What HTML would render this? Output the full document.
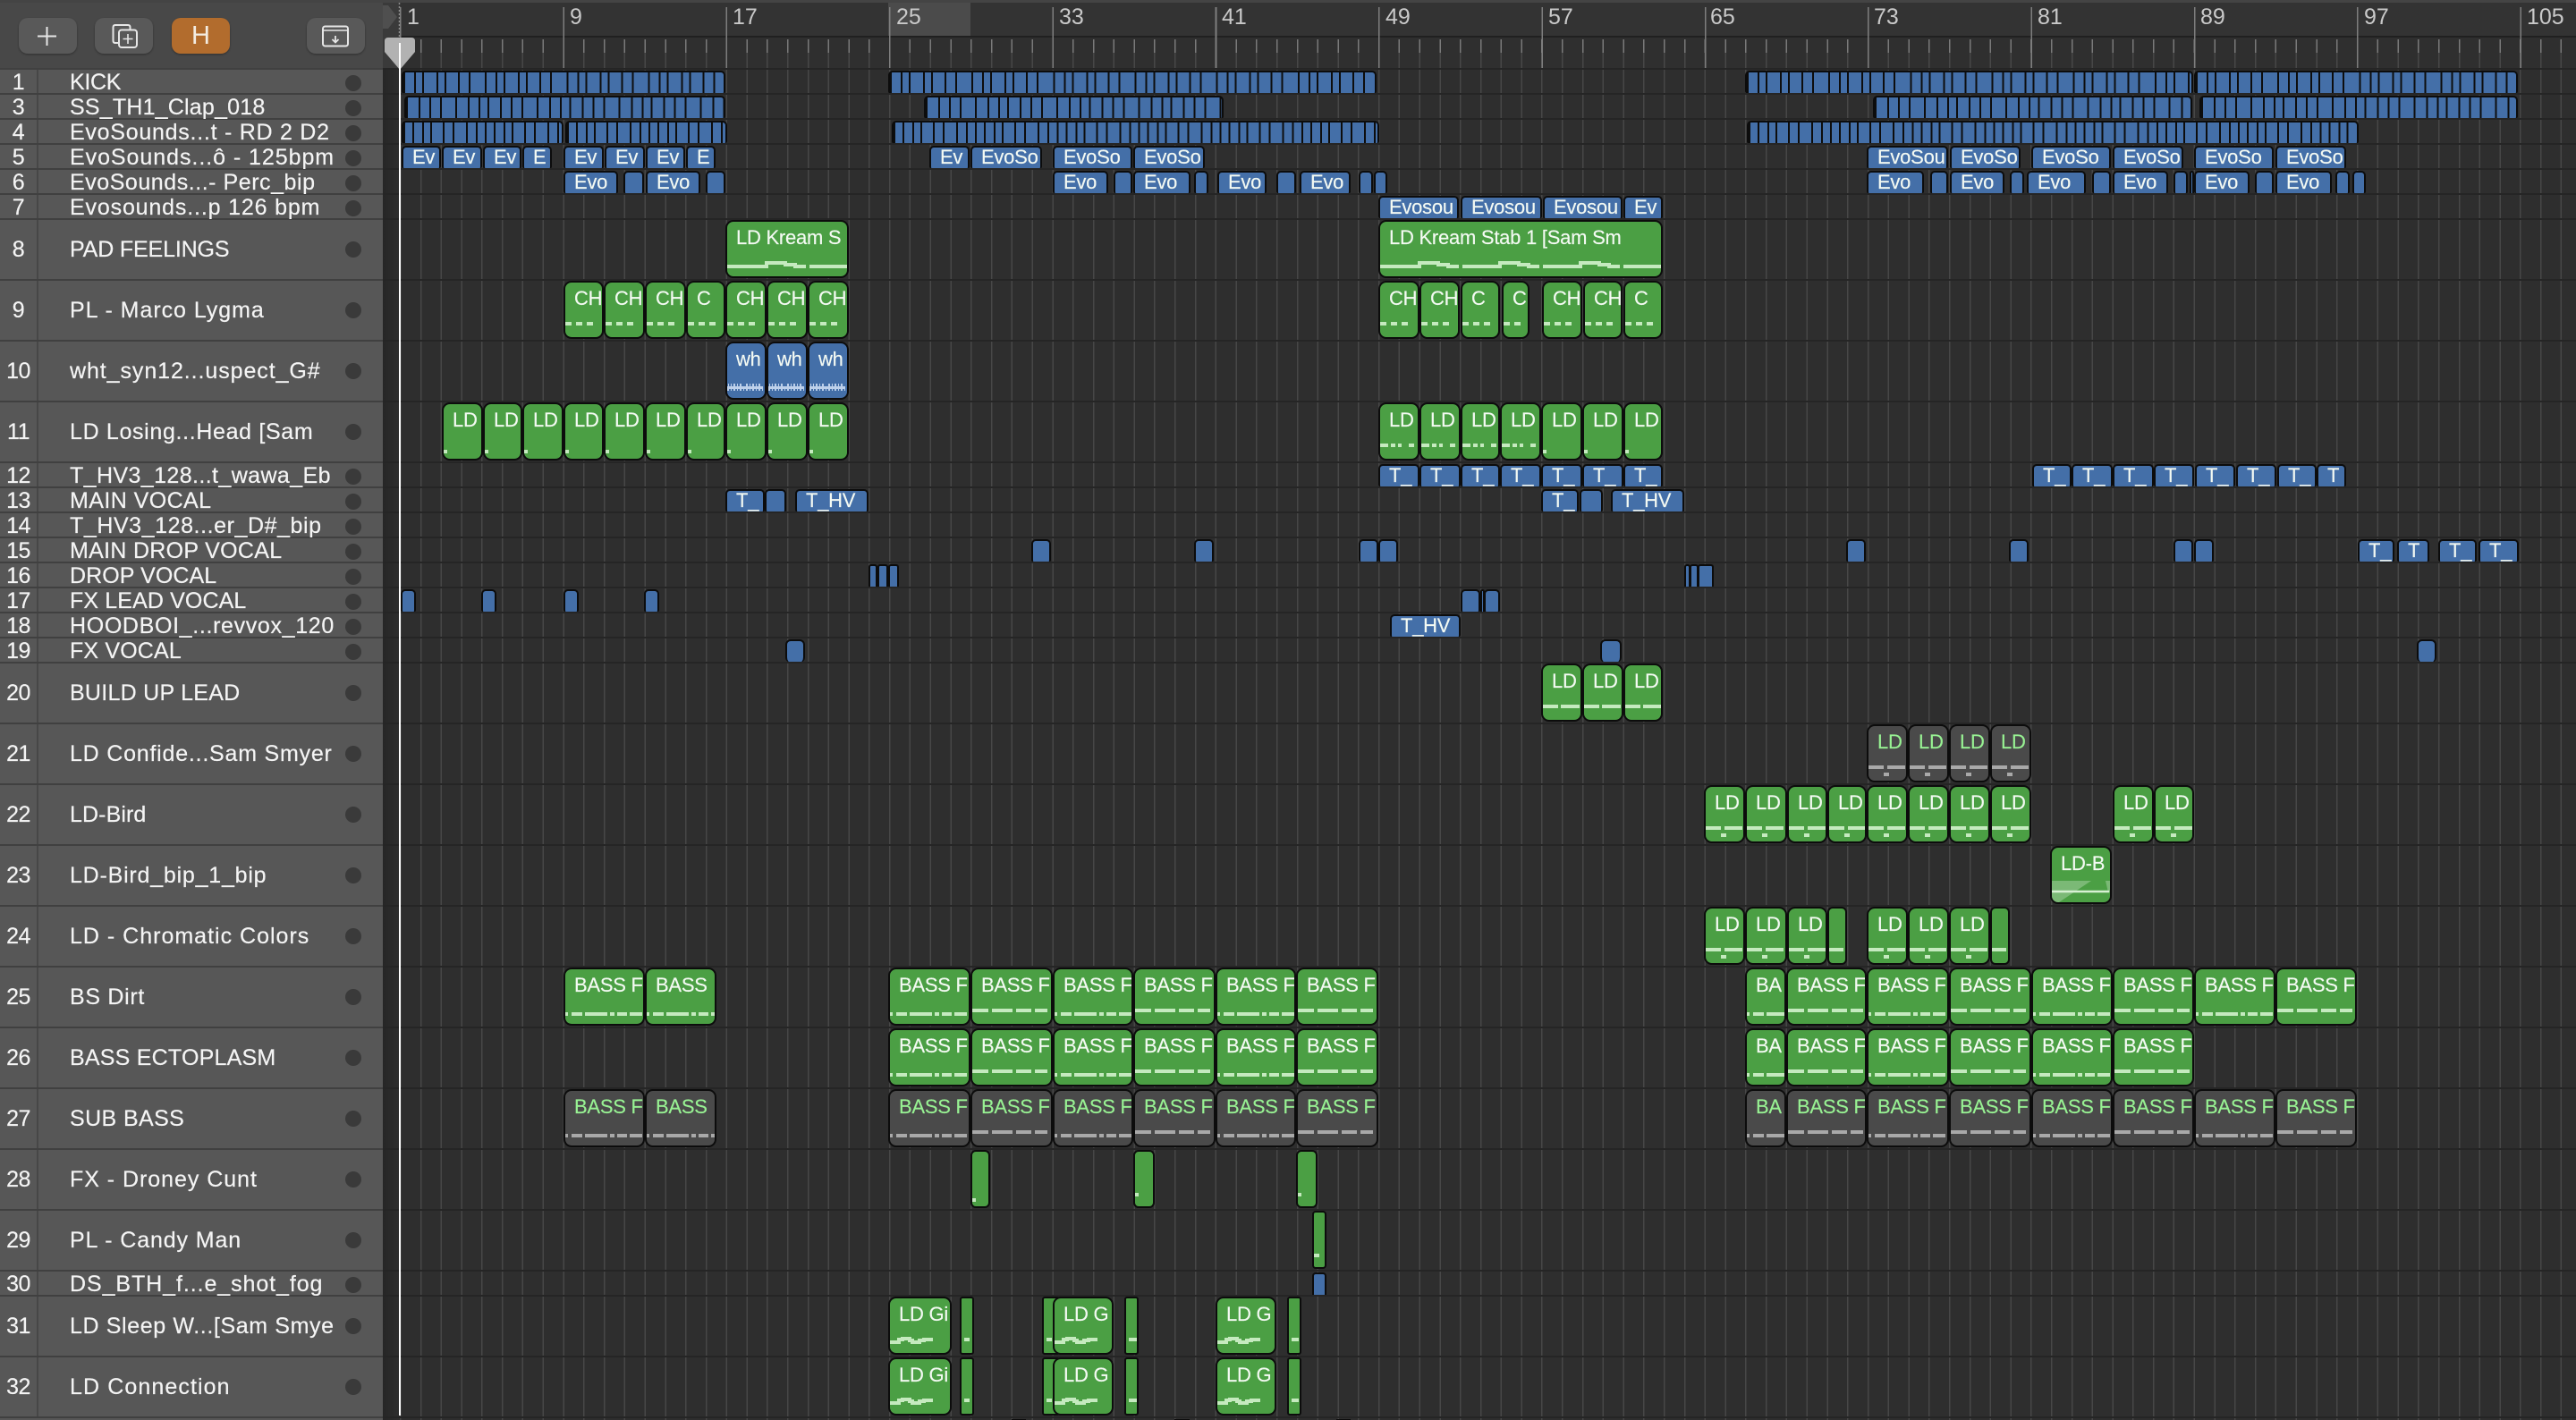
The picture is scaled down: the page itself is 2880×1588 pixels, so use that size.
<!DOCTYPE html>
<html><head><meta charset="utf-8"><title>Arrange</title>
<style>
html,body{margin:0;padding:0;background:#2e2e2e}
#p{position:relative;width:2880px;height:1588px;overflow:hidden;background:#2e2e2e;font-family:"Liberation Sans",sans-serif}
.abs{position:absolute}
.row{position:absolute;left:0;width:2880px}
.s{height:28px}.l{height:68px}
.row::before{content:"";position:absolute;left:0;right:0;top:-1px;height:2px;background:linear-gradient(90deg,#404040 428px,#252525 428px)}
.n,.t{position:absolute;top:0;z-index:1;font-size:25px;color:#f4f4f4;white-space:nowrap;overflow:hidden;-webkit-text-stroke:.2px #f4f4f4}
.n{left:0;width:41px;text-align:center;letter-spacing:-.5px}
.t{left:78px;width:297px;letter-spacing:-.3px}
.s .n,.s .t{height:28px;line-height:31px}
.l .n,.l .t{height:66px;line-height:68px}
.o{position:absolute;left:386px;width:18px;height:18px;border-radius:50%;background:#3a3a3a}
.s .o{top:6.5px}.l .o{top:24.5px}
b{position:absolute;box-sizing:border-box;border:2px solid #0c0c0c;font-weight:400;overflow:hidden;white-space:nowrap;font-size:22px;letter-spacing:-.25px;text-indent:10px;color:#f4faf3;-webkit-text-stroke:.15px currentColor}
.s b{top:2px;height:26px;border-bottom:0;border-radius:5px 5px 3px 3px;line-height:22px}
.l b{top:1px;height:65px;border-radius:9px;line-height:36px}
.g{background:#4b9f44;--c:#c5eabf}
.bl{background:#446fa8;--c:#d3e2f6}
.k{background:#4a4a4a;--c:#a9a9a9;color:#98f293}
.st1{background:repeating-linear-gradient(90deg,#0d0d0d 0 2px,transparent 2px 12px,#0d0d0d 12px 14px,transparent 14px 21px,#0d0d0d 21px 23px,transparent 23px 37px,#0d0d0d 37px 39px,transparent 39px 46px,#0d0d0d 46px 48px,transparent 48px 61px,#0d0d0d 61px 63px,transparent 63px 73px,#0d0d0d 73px 75px,transparent 75px 91.18px),#446fa8}
.st2{background:repeating-linear-gradient(90deg,#0d0d0d 0 2px,transparent 2px 14px,#0d0d0d 14px 16px,transparent 16px 26px,#0d0d0d 26px 28px,transparent 28px 38px,#0d0d0d 38px 40px,transparent 40px 55px,#0d0d0d 55px 57px,transparent 57px 69px,#0d0d0d 69px 71px,transparent 71px 81px,#0d0d0d 81px 83px,transparent 83px 91.18px),#446fa8}
.st3{background:repeating-linear-gradient(90deg,#0d0d0d 0 2px,transparent 2px 10px,#0d0d0d 10px 12px,transparent 12px 21px,#0d0d0d 21px 23px,transparent 23px 30px,#0d0d0d 30px 32px,transparent 32px 44px,#0d0d0d 44px 46px,transparent 46px 55px,#0d0d0d 55px 57px,transparent 57px 70px,#0d0d0d 70px 72px,transparent 72px 81px,#0d0d0d 81px 83px,transparent 83px 91.18px),#446fa8}
u{position:absolute;display:block;text-decoration:none;left:0;right:0;top:44px;height:4px}
.a{background:linear-gradient(90deg,var(--c) 0 18px,transparent 18px 22px,var(--c) 22px 45px,transparent 45px 49px,var(--c) 49px 66px,transparent 66px 70px,var(--c) 70px 84px,transparent 84px)}
.c{top:48px;background:linear-gradient(90deg,var(--c) 0 3px,transparent 3px 7px,var(--c) 7px 19px,transparent 19px 22px,var(--c) 22px 47px,transparent 47px 50px,var(--c) 50px 55px,transparent 55px 58px,var(--c) 58px 69px,transparent 69px 72px,var(--c) 72px 86px,transparent 86px)}
.ld{height:12px;background:linear-gradient(var(--c),var(--c)) 0 0/17px 4px no-repeat,linear-gradient(var(--c),var(--c)) 21px 0/20px 4px no-repeat,linear-gradient(var(--c),var(--c)) 17px 8px/6px 4px no-repeat}
.e{background:linear-gradient(90deg,var(--c) 0 17px,transparent 17px 20px,var(--c) 20px 41px,transparent 41px)}
.ch{background:repeating-linear-gradient(90deg,var(--c) 0 7px,transparent 7px 12px);right:6px}
.w{top:43px;height:10px;right:2px;opacity:.85;background:repeating-linear-gradient(90deg,#446fa8 0 1px,transparent 1px 5px,#446fa8 5px 6px,transparent 6px 13px) 0 0/100% 5px no-repeat,linear-gradient(var(--c),var(--c)) 0 5px/100% 3px no-repeat,repeating-linear-gradient(90deg,var(--c) 0 2px,transparent 2px 4px,var(--c) 4px 5px,transparent 5px 7px) 0 2px/100% 8px no-repeat}
.p{top:51px;width:4px;right:auto}
.d{background:linear-gradient(90deg,var(--c) 0 9px,transparent 9px 12px,var(--c) 12px 17px,transparent 17px 20px,var(--c) 20px 24px,transparent 24px 32px,var(--c) 32px 38px,transparent 38px)}
.m{right:auto;width:6px;background:var(--c)}
svg.q{position:absolute;left:0;top:0}
.rl{position:absolute;top:7px;font-size:25px;line-height:24px;color:#c9c9c9}
.btn{position:absolute;top:20px;width:65px;height:40px;border-radius:10px;background:#595959;box-shadow:0 1px 2px rgba(0,0,0,.35)}
</style></head><body><div id="p">

<!-- sidebar base -->
<div class="abs" style="left:0;top:0;width:428px;height:78px;background:#484848"></div>
<div class="abs" style="left:0;top:0;width:2880px;height:3px;background:#444"></div>
<div class="abs" style="left:0;top:78px;width:428px;height:1510px;background:#575757"></div>
<div class="abs" style="left:41px;top:78px;width:2px;height:1507px;background:#474747"></div>
<div class="abs" style="left:428px;top:3px;width:19px;height:75px;background:#3a3a3a"></div>
<div class="abs" style="left:428px;top:78px;width:19px;height:1510px;background:linear-gradient(90deg,#262626,#2e2e2e)"></div>

<!-- ruler -->
<div class="abs" style="left:447px;top:3px;width:2433px;height:37px;background:#333"></div>
<div class="abs" style="left:993px;top:3px;width:92px;height:37px;background:#4b4b4b"></div>
<div class="abs" style="left:447px;top:40px;width:2433px;height:2px;background:#202020"></div>
<div class="abs" style="left:447px;top:42px;width:2433px;height:36px;background:#2f2f2f"></div>
<div class="abs" style="left:447px;top:59px;width:2433px;height:1529px;background:repeating-linear-gradient(90deg,#474747 0 1.5px,transparent 1.5px 22.79px)"></div>
<div class="abs" style="left:447px;top:44px;width:2433px;height:15px;background:repeating-linear-gradient(90deg,#7a7a7a 0 1.5px,transparent 1.5px 22.79px)"></div>
<div class="abs" style="left:447px;top:8px;width:2433px;height:70px;background:repeating-linear-gradient(90deg,#7e7e7e 0 1.5px,transparent 1.5px 182.35px)"></div>
<div class="rl" style="left:455px">1</div><div class="rl" style="left:637px">9</div><div class="rl" style="left:819px">17</div><div class="rl" style="left:1002px">25</div><div class="rl" style="left:1184px">33</div><div class="rl" style="left:1366px">41</div><div class="rl" style="left:1549px">49</div><div class="rl" style="left:1731px">57</div><div class="rl" style="left:1912px">65</div><div class="rl" style="left:2095px">73</div><div class="rl" style="left:2278px">81</div><div class="rl" style="left:2460px">89</div><div class="rl" style="left:2643px">97</div><div class="rl" style="left:2825px">105</div>

<!-- toolbar -->
<div class="btn" style="left:21px"></div>
<div class="btn" style="left:106px"></div>
<div class="btn" style="left:192px;background:#b26c2d;color:#f3ece2;font-size:29px;line-height:40px;text-align:center">H</div>
<div class="btn" style="left:343px"></div>
<svg class="abs" style="left:0;top:0" width="428" height="78" fill="none" stroke="#e6e6e6" stroke-width="2">
<path d="M42 40.5H63M52.5 30V51"/>
<path d="M133 48H129Q126.500 48 126.500 45.500V30.500Q126.500 28 129 28H143Q145.500 28 145.500 30.500V33"/>
<rect x="133" y="33.500" width="20" height="19.500" rx="3"/>
<path d="M143 38V49M137.500 43.500H148.500" stroke-width="1.600"/>
<rect x="361" y="29.500" width="28" height="22" rx="2.500"/>
<path d="M361 34H389" stroke-width="1.600"/>
<path d="M375 40V47.500M371.500 44L375 47.500L378.500 44" stroke-width="1.800"/>
</svg>

<!-- rows -->
<div class="row s" style="top:77px"><span class="n">1</span><span class="t">KICK</span><i class="o"></i>
<b class="st1" style="left:449px;width:362px"></b><b class="st1" style="left:993px;width:546px"></b><b class="st1" style="left:1951px;width:501px"></b><b class="st1" style="left:2453px;width:362px"></b></div>

<div class="row s" style="top:105px"><span class="n">3</span><span class="t" style="letter-spacing:.2px">SS_TH1_Clap_018</span><i class="o"></i>
<b class="st2" style="left:452px;width:359px"></b><b class="st2" style="left:1033px;width:335px"></b><b class="st2" style="left:2094px;width:357px"></b><b class="st2" style="left:2459px;width:356px"></b></div>

<div class="row s" style="top:133px"><span class="n">4</span><span class="t" style="letter-spacing:.74px">EvoSounds...t - RD 2 D2</span><i class="o"></i>
<b class="st3" style="left:449px;width:181px"></b><b class="st3" style="left:632px;width:181px"></b><b class="st3" style="left:997px;width:545px"></b><b class="st3" style="left:1953px;width:684px"></b></div>

<div class="row s" style="top:161px"><span class="n">5</span><span class="t" style="letter-spacing:.95px">EvoSounds...ô - 125bpm</span><i class="o"></i>
<b class="bl" style="left:449px;width:44px">Ev</b><b class="bl" style="left:494px;width:45px">Ev</b><b class="bl" style="left:540px;width:43px">Ev</b><b class="bl" style="left:584px;width:33px">E</b>
<b class="bl" style="left:630px;width:45px">Ev</b><b class="bl" style="left:676px;width:45px">Ev</b><b class="bl" style="left:722px;width:44px">Ev</b><b class="bl" style="left:767px;width:33px">E</b>
<b class="bl" style="left:1039px;width:45px">Ev</b><b class="bl" style="left:1085px;width:80px">EvoSo</b><b class="bl" style="left:1177px;width:89px">EvoSo</b><b class="bl" style="left:1267px;width:80px">EvoSo</b>
<b class="bl" style="left:2087px;width:91px">EvoSou</b><b class="bl" style="left:2180px;width:79px">EvoSo</b><b class="bl" style="left:2271px;width:89px">EvoSo</b><b class="bl" style="left:2362px;width:79px">EvoSo</b><b class="bl" style="left:2453px;width:89px">EvoSo</b><b class="bl" style="left:2544px;width:79px">EvoSo</b></div>

<div class="row s" style="top:189px"><span class="n">6</span><span class="t" style="letter-spacing:.54px">EvoSounds...- Perc_bip</span><i class="o"></i>
<b class="bl" style="left:630px;width:61px">Evo</b><b class="bl" style="left:697px;width:23px"></b><b class="bl" style="left:722px;width:61px">Evo</b><b class="bl" style="left:789px;width:22px"></b>
<b class="bl" style="left:1177px;width:62px">Evo</b><b class="bl" style="left:1245px;width:21px"></b><b class="bl" style="left:1267px;width:64px">Evo</b><b class="bl" style="left:1335px;width:16px"></b><b class="bl" style="left:1361px;width:55px">Evo</b><b class="bl" style="left:1427px;width:22px"></b><b class="bl" style="left:1453px;width:57px">Evo</b><b class="bl" style="left:1519px;width:16px"></b><b class="bl" style="left:1536px;width:15px"></b>
<b class="bl" style="left:2087px;width:64px">Evo</b><b class="bl" style="left:2158px;width:20px"></b><b class="bl" style="left:2180px;width:61px">Evo</b><b class="bl" style="left:2247px;width:16px"></b><b class="bl" style="left:2266px;width:66px">Evo</b><b class="bl" style="left:2339px;width:21px"></b><b class="bl" style="left:2362px;width:62px">Evo</b><b class="bl" style="left:2430px;width:16px"></b><b class="bl" style="left:2448px;width:5px"></b><b class="bl" style="left:2453px;width:62px">Evo</b><b class="bl" style="left:2521px;width:21px"></b><b class="bl" style="left:2544px;width:63px">Evo</b><b class="bl" style="left:2611px;width:16px"></b><b class="bl" style="left:2630px;width:15px"></b></div>

<div class="row s" style="top:217px"><span class="n">7</span><span class="t" style="letter-spacing:.84px">Evosounds...p 126 bpm</span><i class="o"></i>
<b class="bl" style="left:1541px;width:90px">Evosou</b><b class="bl" style="left:1633px;width:91px">Evosou</b><b class="bl" style="left:1725px;width:89px">Evosou</b><b class="bl" style="left:1815px;width:44px">Ev</b></div>

<div class="row l" style="top:245px"><span class="n">8</span><span class="t" style="letter-spacing:-.15px">PAD FEELINGS</span><i class="o"></i>
<b class="g" style="left:811px;width:138px">LD Kream S<svg class="q" width="134" height="60"><path d="M0 50H44V46H65V48H76V50H88M92 50H134" fill="none" stroke="#c5eabf" stroke-width="4"/></svg></b>
<b class="g" style="left:1541px;width:318px">LD Kream Stab 1 [Sam Sm<svg class="q" width="314" height="60"><path d="M0 50H44V46H65V48H76V50H88M92 50H134V46H155V48H166V50H178M182 50H224V46H245V48H256V50H268M272 50H314" fill="none" stroke="#c5eabf" stroke-width="4"/></svg></b></div>

<div class="row l" style="top:313px"><span class="n">9</span><span class="t" style="letter-spacing:.96px">PL - Marco Lygma</span><i class="o"></i>
<b class="g" style="left:630px;width:45px">CH<u class="ch"></u></b><b class="g" style="left:675px;width:46px">CH<u class="ch"></u></b><b class="g" style="left:721px;width:46px">CH<u class="ch"></u></b><b class="g" style="left:767px;width:44px">C<u class="ch"></u></b><b class="g" style="left:811px;width:46px">CH<u class="ch"></u></b><b class="g" style="left:857px;width:46px">CH<u class="ch"></u></b><b class="g" style="left:903px;width:46px">CH<u class="ch"></u></b>
<b class="g" style="left:1541px;width:46px">CH<u class="ch"></u></b><b class="g" style="left:1587px;width:45px">CH<u class="ch"></u></b><b class="g" style="left:1633px;width:44px">C<u class="ch"></u></b><b class="g" style="left:1679px;width:31px">C<u class="ch"></u></b><b class="g" style="left:1724px;width:45px">CH<u class="ch"></u></b><b class="g" style="left:1770px;width:44px">CH<u class="ch"></u></b><b class="g" style="left:1815px;width:44px">C<u class="ch"></u></b></div>

<div class="row l" style="top:381px"><span class="n">10</span><span class="t" style="letter-spacing:.92px">wht_syn12...uspect_G#</span><i class="o"></i>
<b class="bl" style="left:811px;width:46px">wh<u class="w"></u></b><b class="bl" style="left:857px;width:46px">wh<u class="w"></u></b><b class="bl" style="left:903px;width:46px">wh<u class="w"></u></b></div>

<div class="row l" style="top:449px"><span class="n">11</span><span class="t" style="letter-spacing:.66px">LD Losing...Head [Sam</span><i class="o"></i>
<b class="g" style="left:494px;width:46px">LD<u class="p" style="background:#c5eabf"></u></b><b class="g" style="left:540px;width:44px">LD<u class="p" style="background:#c5eabf"></u></b><b class="g" style="left:584px;width:46px">LD<u class="p" style="background:#c5eabf"></u></b><b class="g" style="left:630px;width:45px">LD<u class="p" style="background:#c5eabf"></u></b><b class="g" style="left:675px;width:46px">LD<u class="p" style="background:#c5eabf"></u></b><b class="g" style="left:721px;width:46px">LD<u class="p" style="background:#c5eabf"></u></b><b class="g" style="left:767px;width:44px">LD<u class="p" style="background:#c5eabf"></u></b><b class="g" style="left:811px;width:46px">LD<u class="p" style="background:#c5eabf"></u></b><b class="g" style="left:857px;width:46px">LD<u class="p" style="background:#c5eabf"></u></b><b class="g" style="left:903px;width:46px">LD<u class="p" style="background:#c5eabf"></u></b>
<b class="g" style="left:1541px;width:46px">LD<u class="d"></u></b><b class="g" style="left:1587px;width:46px">LD<u class="d"></u></b><b class="g" style="left:1633px;width:44px">LD<u class="d"></u></b><b class="g" style="left:1677px;width:46px">LD<u class="d"></u></b><b class="g" style="left:1723px;width:46px">LD<u class="p" style="background:#c5eabf"></u></b><b class="g" style="left:1769px;width:46px">LD<u class="p" style="background:#c5eabf"></u></b><b class="g" style="left:1815px;width:44px">LD<u class="p" style="background:#c5eabf"></u></b></div>

<div class="row s" style="top:517px"><span class="n">12</span><span class="t" style="letter-spacing:.4px">T_HV3_128...t_wawa_Eb</span><i class="o"></i>
<b class="bl" style="left:1541px;width:46px">T_</b><b class="bl" style="left:1587px;width:46px">T_</b><b class="bl" style="left:1633px;width:44px">T_</b><b class="bl" style="left:1677px;width:46px">T_</b><b class="bl" style="left:1723px;width:46px">T_</b><b class="bl" style="left:1769px;width:46px">T_</b><b class="bl" style="left:1815px;width:44px">T_</b>
<b class="bl" style="left:2272px;width:44px">T_</b><b class="bl" style="left:2316px;width:46px">T_</b><b class="bl" style="left:2362px;width:46px">T_</b><b class="bl" style="left:2408px;width:45px">T_</b><b class="bl" style="left:2454px;width:45px">T_</b><b class="bl" style="left:2500px;width:45px">T_</b><b class="bl" style="left:2546px;width:44px">T_</b><b class="bl" style="left:2590px;width:33px">T</b></div>

<div class="row s" style="top:545px"><span class="n">13</span><span class="t" style="letter-spacing:.43px">MAIN VOCAL</span><i class="o"></i>
<b class="bl" style="left:811px;width:44px">T_</b><b class="bl" style="left:855px;width:24px"></b><b class="bl" style="left:889px;width:82px">T_HV</b>
<b class="bl" style="left:1723px;width:42px">T_</b><b class="bl" style="left:1766px;width:26px"></b><b class="bl" style="left:1801px;width:82px">T_HV</b></div>

<div class="row s" style="top:573px"><span class="n">14</span><span class="t" style="letter-spacing:.57px">T_HV3_128...er_D#_bip</span><i class="o"></i></div>

<div class="row s" style="top:601px"><span class="n">15</span><span class="t" style="letter-spacing:.3px">MAIN DROP VOCAL</span><i class="o"></i>
<b class="bl" style="left:1153px;width:22px"></b><b class="bl" style="left:1335px;width:22px"></b><b class="bl" style="left:1519px;width:22px"></b><b class="bl" style="left:1541px;width:22px"></b><b class="bl" style="left:2064px;width:22px"></b><b class="bl" style="left:2246px;width:22px"></b><b class="bl" style="left:2430px;width:22px"></b><b class="bl" style="left:2453px;width:22px"></b>
<b class="bl" style="left:2636px;width:41px">T_</b><b class="bl" style="left:2680px;width:36px">T</b><b class="bl" style="left:2726px;width:43px">T_</b><b class="bl" style="left:2771px;width:45px">T_</b></div>

<div class="row s" style="top:629px"><span class="n">16</span><span class="t" style="letter-spacing:.07px">DROP VOCAL</span><i class="o"></i>
<b class="bl" style="left:971px;width:10px;border-radius:3px 3px 0 0"></b><b class="bl" style="left:981px;width:12px;border-radius:3px 3px 0 0"></b><b class="bl" style="left:993px;width:12px;border-radius:3px 3px 0 0"></b>
<b class="bl" style="left:1883px;width:7px;border-radius:3px 3px 0 0"></b><b class="bl" style="left:1889px;width:10px;border-radius:3px 3px 0 0"></b><b class="bl" style="left:1898px;width:18px;border-radius:3px 3px 0 0"></b></div>

<div class="row s" style="top:657px"><span class="n">17</span><span class="t" style="letter-spacing:.12px">FX LEAD VOCAL</span><i class="o"></i>
<b class="bl" style="left:448px;width:17px"></b><b class="bl" style="left:538px;width:17px"></b><b class="bl" style="left:630px;width:17px"></b><b class="bl" style="left:720px;width:17px"></b><b class="bl" style="left:1633px;width:22px"></b><b class="bl" style="left:1655px;width:5px"></b><b class="bl" style="left:1659px;width:18px"></b></div>

<div class="row s" style="top:685px"><span class="n">18</span><span class="t" style="letter-spacing:.66px">HOODBOI_...revvox_120</span><i class="o"></i>
<b class="bl" style="left:1554px;width:79px">T_HV</b></div>

<div class="row s" style="top:713px"><span class="n">19</span><span class="t" style="letter-spacing:.16px">FX VOCAL</span><i class="o"></i>
<b class="bl" style="left:878px;width:22px;border-radius:6px"></b><b class="bl" style="left:1789px;width:24px;border-radius:6px"></b><b class="bl" style="left:2702px;width:22px;border-radius:6px"></b></div>

<div class="row l" style="top:741px"><span class="n">20</span><span class="t" style="letter-spacing:.26px">BUILD UP LEAD</span><i class="o"></i>
<b class="g" style="left:1723px;width:46px">LD<u class="e"></u></b><b class="g" style="left:1769px;width:46px">LD<u class="e"></u></b><b class="g" style="left:1815px;width:44px">LD<u class="e"></u></b></div>

<div class="row l" style="top:809px"><span class="n">21</span><span class="t" style="letter-spacing:.78px">LD Confide...Sam Smyer</span><i class="o"></i>
<b class="k" style="left:2087px;width:46px">LD<u class="ld"></u></b><b class="k" style="left:2133px;width:46px">LD<u class="ld"></u></b><b class="k" style="left:2179px;width:46px">LD<u class="ld"></u></b><b class="k" style="left:2225px;width:46px">LD<u class="ld"></u></b></div>

<div class="row l" style="top:877px"><span class="n">22</span><span class="t" style="letter-spacing:.1px">LD-Bird</span><i class="o"></i>
<b class="g" style="left:1905px;width:46px">LD<u class="ld"></u></b><b class="g" style="left:1951px;width:47px">LD<u class="ld"></u></b><b class="g" style="left:1998px;width:45px">LD<u class="ld"></u></b><b class="g" style="left:2043px;width:44px">LD<u class="ld"></u></b><b class="g" style="left:2087px;width:46px">LD<u class="ld"></u></b><b class="g" style="left:2133px;width:46px">LD<u class="ld"></u></b><b class="g" style="left:2179px;width:46px">LD<u class="ld"></u></b><b class="g" style="left:2225px;width:46px">LD<u class="ld"></u></b><b class="g" style="left:2362px;width:46px">LD<u class="ld"></u></b><b class="g" style="left:2408px;width:45px">LD<u class="ld"></u></b></div>

<div class="row l" style="top:945px"><span class="n">23</span><span class="t" style="letter-spacing:.78px">LD-Bird_bip_1_bip</span><i class="o"></i>
<b class="g" style="left:2292px;width:69px">LD-B<svg class="q" width="65" height="61"><path d="M0 37H44L8 61H0ZM60 37H65V50H63Z" fill="#fff" fill-opacity=".27"/><path d="M0 49H64" stroke="#d7f0d3" stroke-width="2.500"/></svg></b></div>

<div class="row l" style="top:1013px"><span class="n">24</span><span class="t" style="letter-spacing:1px">LD - Chromatic Colors</span><i class="o"></i>
<b class="g" style="left:1905px;width:46px">LD<u class="ld"></u></b><b class="g" style="left:1951px;width:47px">LD<u class="ld"></u></b><b class="g" style="left:1998px;width:45px">LD<u class="ld"></u></b><b class="g" style="left:2043px;width:22px;border-radius:6px"><u class="a" style="right:2px"></u></b><b class="g" style="left:2087px;width:46px">LD<u class="ld"></u></b><b class="g" style="left:2133px;width:46px">LD<u class="ld"></u></b><b class="g" style="left:2179px;width:46px">LD<u class="ld"></u></b><b class="g" style="left:2225px;width:22px;border-radius:6px"><u class="a" style="right:2px"></u></b></div>

<div class="row l" style="top:1081px"><span class="n">25</span><span class="t" style="letter-spacing:.7px">BS Dirt</span><i class="o"></i>
<b class="g" style="left:630px;width:91px">BASS F<u class="c"></u></b><b class="g" style="left:721px;width:80px">BASS<u class="c"></u></b>
<b class="g" style="left:993px;width:92px">BASS F<u class="c"></u></b><b class="g" style="left:1085px;width:92px">BASS F<u class="a"></u></b><b class="g" style="left:1177px;width:90px">BASS F<u class="c"></u></b><b class="g" style="left:1267px;width:92px">BASS F<u class="a"></u></b><b class="g" style="left:1359px;width:90px">BASS F<u class="c"></u></b><b class="g" style="left:1449px;width:92px">BASS F<u class="a"></u></b>
<b class="g" style="left:1951px;width:46px">BA<u class="c"></u></b><b class="g" style="left:1997px;width:90px">BASS F<u class="a"></u></b><b class="g" style="left:2087px;width:92px">BASS F<u class="c"></u></b><b class="g" style="left:2179px;width:92px">BASS F<u class="a"></u></b><b class="g" style="left:2271px;width:91px">BASS F<u class="c"></u></b><b class="g" style="left:2362px;width:91px">BASS F<u class="a"></u></b><b class="g" style="left:2453px;width:91px">BASS F<u class="c"></u></b><b class="g" style="left:2544px;width:91px">BASS F<u class="a"></u></b></div>

<div class="row l" style="top:1149px"><span class="n">26</span><span class="t" style="letter-spacing:.22px">BASS ECTOPLASM</span><i class="o"></i>
<b class="g" style="left:993px;width:92px">BASS F<u class="c"></u></b><b class="g" style="left:1085px;width:92px">BASS F<u class="a"></u></b><b class="g" style="left:1177px;width:90px">BASS F<u class="c"></u></b><b class="g" style="left:1267px;width:92px">BASS F<u class="a"></u></b><b class="g" style="left:1359px;width:90px">BASS F<u class="c"></u></b><b class="g" style="left:1449px;width:92px">BASS F<u class="a"></u></b>
<b class="g" style="left:1951px;width:46px">BA<u class="c"></u></b><b class="g" style="left:1997px;width:90px">BASS F<u class="a"></u></b><b class="g" style="left:2087px;width:92px">BASS F<u class="c"></u></b><b class="g" style="left:2179px;width:92px">BASS F<u class="a"></u></b><b class="g" style="left:2271px;width:91px">BASS F<u class="c"></u></b><b class="g" style="left:2362px;width:91px">BASS F<u class="a"></u></b></div>

<div class="row l" style="top:1217px"><span class="n">27</span><span class="t" style="letter-spacing:.4px">SUB BASS</span><i class="o"></i>
<b class="k" style="left:630px;width:91px">BASS F<u class="c"></u></b><b class="k" style="left:721px;width:80px">BASS<u class="c"></u></b>
<b class="k" style="left:993px;width:92px">BASS F<u class="c"></u></b><b class="k" style="left:1085px;width:92px">BASS F<u class="a"></u></b><b class="k" style="left:1177px;width:90px">BASS F<u class="c"></u></b><b class="k" style="left:1267px;width:92px">BASS F<u class="a"></u></b><b class="k" style="left:1359px;width:90px">BASS F<u class="c"></u></b><b class="k" style="left:1449px;width:92px">BASS F<u class="a"></u></b>
<b class="k" style="left:1951px;width:46px">BA<u class="c"></u></b><b class="k" style="left:1997px;width:90px">BASS F<u class="a"></u></b><b class="k" style="left:2087px;width:92px">BASS F<u class="c"></u></b><b class="k" style="left:2179px;width:92px">BASS F<u class="a"></u></b><b class="k" style="left:2271px;width:91px">BASS F<u class="c"></u></b><b class="k" style="left:2362px;width:91px">BASS F<u class="a"></u></b><b class="k" style="left:2453px;width:91px">BASS F<u class="c"></u></b><b class="k" style="left:2544px;width:91px">BASS F<u class="a"></u></b></div>

<div class="row l" style="top:1285px"><span class="n">28</span><span class="t" style="letter-spacing:.96px">FX - Droney Cunt</span><i class="o"></i>
<b class="g" style="left:1085px;width:22px;border-radius:6px"><u class="m" style="top:52px;width:4px"></u></b><b class="g" style="left:1267px;width:24px;border-radius:6px"><u class="m" style="top:46px;width:4px"></u></b><b class="g" style="left:1449px;width:24px;border-radius:6px"><u class="m" style="top:46px;width:4px"></u></b></div>

<div class="row l" style="top:1353px"><span class="n">29</span><span class="t" style="letter-spacing:.88px">PL - Candy Man</span><i class="o"></i>
<b class="g" style="left:1467px;width:16px;border-radius:4px"><u class="m" style="top:46px"></u></b></div>

<div class="row s" style="top:1421px"><span class="n">30</span><span class="t" style="letter-spacing:.92px">DS_BTH_f...e_shot_fog</span><i class="o"></i>
<b class="bl" style="left:1467px;width:16px;border-radius:4px 4px 0 0"></b></div>

<div class="row l" style="top:1449px"><span class="n">31</span><span class="t" style="letter-spacing:.62px">LD Sleep W...[Sam Smye</span><i class="o"></i>
<b class="g" style="left:993px;width:71px">LD Gi<svg class="q" width="67" height="60"><path d="M0 49H10V46H14V45H22V47H25V49H33V47H38V46H48" fill="none" stroke="#c5eabf" stroke-width="4"/></svg></b><b class="g" style="left:1073px;width:16px;border-radius:3px"><u class="m" style="left:3px"></u></b><b class="g" style="left:1165px;width:20px;border-radius:3px"><u class="m" style="left:3px"></u></b>
<b class="g" style="left:1177px;width:68px">LD G<svg class="q" width="64" height="60"><path d="M0 49H10V46H14V45H22V47H25V49H33V47H38V46H48" fill="none" stroke="#c5eabf" stroke-width="4"/></svg></b><b class="g" style="left:1257px;width:16px;border-radius:3px"><u class="m" style="left:3px;width:10px"></u></b>
<b class="g" style="left:1359px;width:68px">LD G<svg class="q" width="64" height="60"><path d="M0 49H10V46H14V45H22V47H25V49H33V47H38V46H48" fill="none" stroke="#c5eabf" stroke-width="4"/></svg></b><b class="g" style="left:1439px;width:16px;border-radius:3px"><u class="m" style="left:3px;width:8px"></u></b></div>

<div class="row l" style="top:1517px"><span class="n">32</span><span class="t" style="letter-spacing:1.1px">LD Connection</span><i class="o"></i>
<b class="g" style="left:993px;width:71px">LD Gi<svg class="q" width="67" height="60"><path d="M0 49H10V46H14V45H22V47H25V49H33V47H38V46H48" fill="none" stroke="#c5eabf" stroke-width="4"/></svg></b><b class="g" style="left:1073px;width:16px;border-radius:3px"><u class="m" style="left:3px"></u></b><b class="g" style="left:1165px;width:20px;border-radius:3px"><u class="m" style="left:3px"></u></b>
<b class="g" style="left:1177px;width:68px">LD G<svg class="q" width="64" height="60"><path d="M0 49H10V46H14V45H22V47H25V49H33V47H38V46H48" fill="none" stroke="#c5eabf" stroke-width="4"/></svg></b><b class="g" style="left:1257px;width:16px;border-radius:3px"><u class="m" style="left:3px;width:10px"></u></b>
<b class="g" style="left:1359px;width:68px">LD G<svg class="q" width="64" height="60"><path d="M0 49H10V46H14V45H22V47H25V49H33V47H38V46H48" fill="none" stroke="#c5eabf" stroke-width="4"/></svg></b><b class="g" style="left:1439px;width:16px;border-radius:3px"><u class="m" style="left:3px;width:8px"></u></b></div>

<div class="row" style="top:1585px;height:3px">
<b style="left:1131px;width:16px;top:2px;height:3px;background:#0c0c0c"></b><b style="left:1313px;width:17px;top:2px;height:3px;background:#0c0c0c"></b><b style="left:1494px;width:16px;top:2px;height:3px;background:#0c0c0c"></b></div>

<!-- playhead -->
<svg class="abs" style="left:428px;top:0" width="40" height="90">
<path d="M0 6H6L16 19L6 32H0Z" fill="#4f4f4f"/>
<path d="M18.500 3V42" stroke="#8a8a8a" stroke-width="1.500" stroke-dasharray="2 2"/>
<path d="M2 46Q2 42 6 42H32Q36 42 36 46V58L19 78L2 58Z" fill="#b2b2b2"/>
</svg>
<div class="abs" style="left:446px;top:48px;width:2px;height:1535px;background:#fff"></div>

</div></body></html>
